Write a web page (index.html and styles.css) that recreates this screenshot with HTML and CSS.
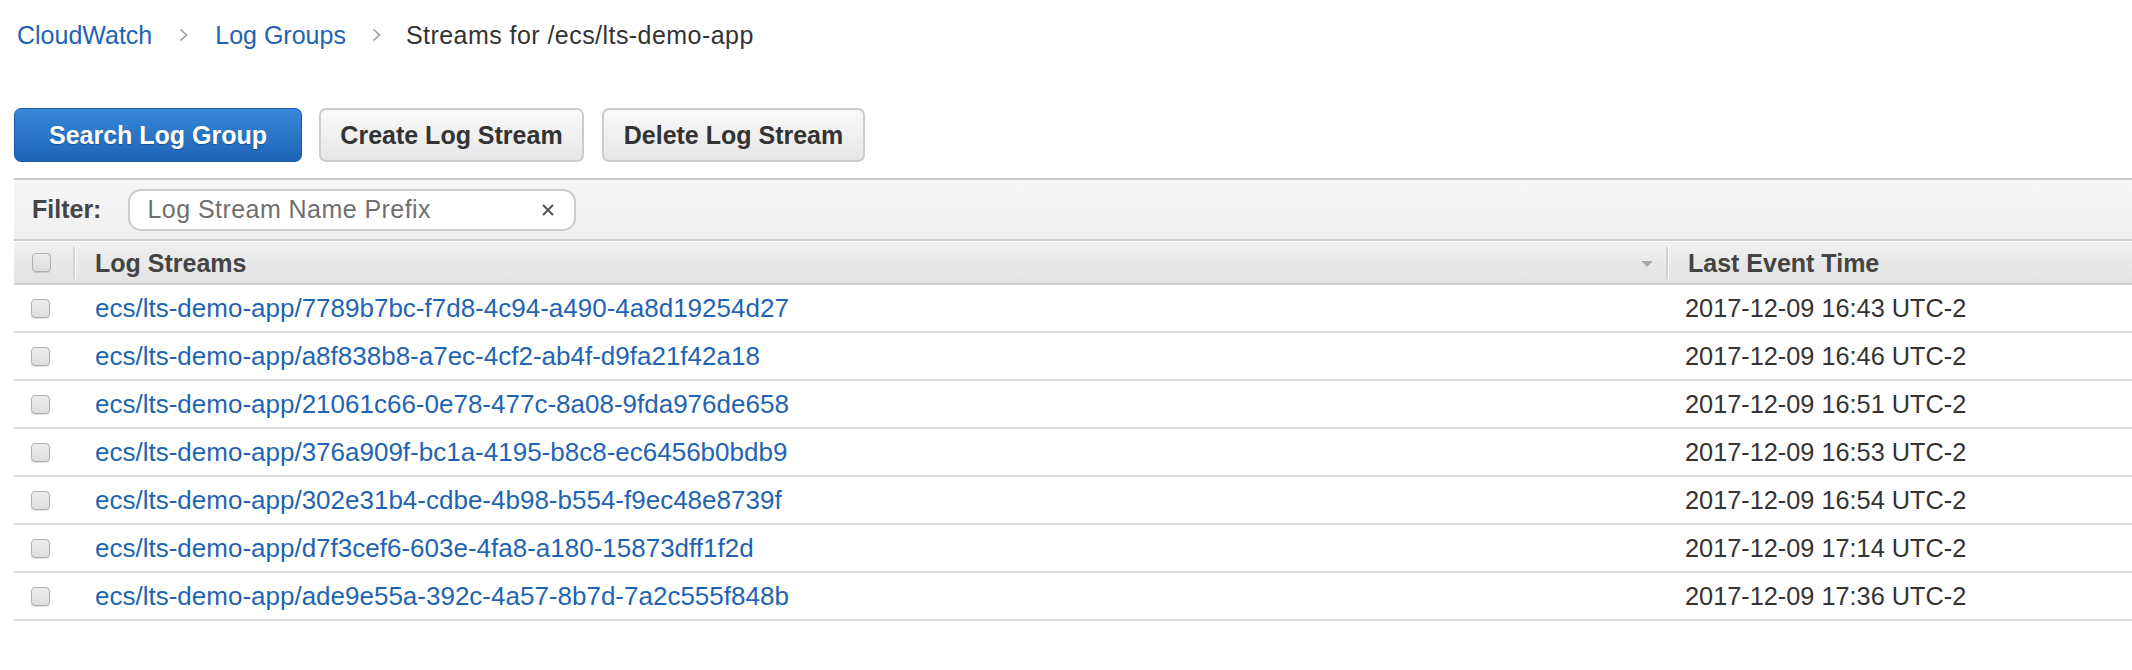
FILE: index.html
```html
<!DOCTYPE html>
<html lang="en">
<head>
<meta charset="utf-8">
<title>Streams for /ecs/lts-demo-app</title>
<link rel="stylesheet" href="styles.css">
</head>
<body>
<div class="page">
  <nav class="breadcrumb">
    <a class="crumb-link" href="#">CloudWatch</a>
    <svg class="chev" width="9" height="14" viewBox="0 0 9 14"><polyline points="1.5,1.5 7.5,7 1.5,12.5" fill="none" stroke="#9a9a9a" stroke-width="1.6"/></svg>
    <a class="crumb-link" href="#">Log Groups</a>
    <svg class="chev" width="9" height="14" viewBox="0 0 9 14"><polyline points="1.5,1.5 7.5,7 1.5,12.5" fill="none" stroke="#9a9a9a" stroke-width="1.6"/></svg>
    <span class="crumb-current">Streams for /ecs/lts-demo-app</span>
  </nav>

  <div class="toolbar">
    <button class="btn btn-primary">Search Log Group</button>
    <button class="btn btn-secondary btn-create">Create Log Stream</button>
    <button class="btn btn-secondary btn-delete">Delete Log Stream</button>
  </div>

  <div class="filter-bar">
    <span class="filter-label">Filter:</span>
    <div class="filter-input">
      <span class="placeholder">Log Stream Name Prefix</span>
      <svg class="clear" width="12" height="12" viewBox="0 0 12 12"><path d="M1 1 L11 11 M11 1 L1 11" stroke="#555" stroke-width="2" fill="none"/></svg>
    </div>
  </div>

  <div class="table">
    <div class="row head">
      <div class="cell cb-cell"><span class="cb"></span></div>
      <div class="cell hcell name-head"><span>Log Streams</span><span class="sort"></span></div>
      <div class="cell hcell">Last Event Time</div>
    </div>
    <div class="row">
      <div class="cell cb-cell"><span class="cb"></span></div>
      <div class="cell name"><a href="#">ecs/lts-demo-app/7789b7bc-f7d8-4c94-a490-4a8d19254d27</a></div>
      <div class="cell time">2017-12-09 16:43 UTC-2</div>
    </div>
    <div class="row">
      <div class="cell cb-cell"><span class="cb"></span></div>
      <div class="cell name"><a href="#">ecs/lts-demo-app/a8f838b8-a7ec-4cf2-ab4f-d9fa21f42a18</a></div>
      <div class="cell time">2017-12-09 16:46 UTC-2</div>
    </div>
    <div class="row">
      <div class="cell cb-cell"><span class="cb"></span></div>
      <div class="cell name"><a href="#">ecs/lts-demo-app/21061c66-0e78-477c-8a08-9fda976de658</a></div>
      <div class="cell time">2017-12-09 16:51 UTC-2</div>
    </div>
    <div class="row">
      <div class="cell cb-cell"><span class="cb"></span></div>
      <div class="cell name"><a href="#">ecs/lts-demo-app/376a909f-bc1a-4195-b8c8-ec6456b0bdb9</a></div>
      <div class="cell time">2017-12-09 16:53 UTC-2</div>
    </div>
    <div class="row">
      <div class="cell cb-cell"><span class="cb"></span></div>
      <div class="cell name"><a href="#">ecs/lts-demo-app/302e31b4-cdbe-4b98-b554-f9ec48e8739f</a></div>
      <div class="cell time">2017-12-09 16:54 UTC-2</div>
    </div>
    <div class="row">
      <div class="cell cb-cell"><span class="cb"></span></div>
      <div class="cell name"><a href="#">ecs/lts-demo-app/d7f3cef6-603e-4fa8-a180-15873dff1f2d</a></div>
      <div class="cell time">2017-12-09 17:14 UTC-2</div>
    </div>
    <div class="row">
      <div class="cell cb-cell"><span class="cb"></span></div>
      <div class="cell name"><a href="#">ecs/lts-demo-app/ade9e55a-392c-4a57-8b7d-7a2c555f848b</a></div>
      <div class="cell time">2017-12-09 17:36 UTC-2</div>
    </div>
  </div>
</div>
</body>
</html>
```
FILE: styles.css
```css
html, body {
  margin: 0;
  padding: 0;
  background: #ffffff;
}
body {
  font-family: "Liberation Sans", Arial, Helvetica, sans-serif;
  color: #333333;
}
.page {
  padding-left: 14px;
}
.breadcrumb {
  display: flex;
  align-items: center;
  padding: 21px 0 0 3px;
  height: 28px;
  font-size: 25px;
  line-height: 28px;
}
.crumb-link {
  color: #1f64b3;
  text-decoration: none;
}
.chev {
  margin: 0 27px;
  flex: none;
}
.breadcrumb .chev + .crumb-link + .chev {
  margin: 0 25px 0 26px;
}
.crumb-current {
  color: #333333;
  letter-spacing: 0.45px;
}
.toolbar {
  display: flex;
  gap: 17px;
  margin-top: 59px;
}
.btn {
  font-family: "Liberation Sans", Arial, Helvetica, sans-serif;
  font-size: 25px;
  font-weight: bold;
  height: 54px;
  line-height: 50px;
  border-radius: 7px;
  cursor: pointer;
  margin: 0;
  padding: 0;
  text-align: center;
}
.btn-primary {
  width: 288px;
  color: #ffffff;
  border: 1px solid #1a5aa6;
  background: linear-gradient(#3788d9, #1d63b5);
  text-shadow: 0 1px 1px rgba(0,0,0,0.25);
}
.btn-secondary {
  color: #333333;
  border: 2px solid #cccccc;
  background: linear-gradient(#fafafa, #e6e6e6);
}
.btn-create {
  width: 265px;
}
.btn-delete {
  width: 263px;
  margin-left: 1px;
}
.filter-bar {
  margin-top: 16px;
  display: flex;
  align-items: center;
  height: 59px;
  border-top: 2px solid #cbcbcb;
  border-bottom: 2px solid #cbcbcb;
  background: linear-gradient(#f6f6f6, #f0f0f0);
  padding-left: 18px;
}
.filter-label {
  font-size: 25px;
  font-weight: bold;
  color: #444444;
  margin-right: 27px;
}
.filter-input {
  box-sizing: border-box;
  width: 448px;
  height: 42px;
  border: 2px solid #cccccc;
  border-radius: 13px;
  background: #ffffff;
  display: flex;
  align-items: center;
  justify-content: space-between;
  padding: 0 20px 0 17px;
}
.placeholder {
  font-size: 25px;
  letter-spacing: 0.45px;
  color: #6f6f6f;
}
.clear {
  flex: none;
}
.table {
  display: flex;
  flex-direction: column;
}
.row {
  display: grid;
  grid-template-columns: 59px 1593px 1fr;
  height: 46px;
  border-bottom: 2px solid #dddddd;
  align-items: center;
}
.row.head {
  height: 41px;
  border-top: 1px solid #ffffff;
  border-bottom: 2px solid #cfcfcf;
  background: linear-gradient(#f0f0f0, #e2e2e2);
  align-items: stretch;
}
.cell {
  display: flex;
  align-items: center;
  min-width: 0;
  white-space: nowrap;
}
.cb-cell {
  padding-left: 17px;
}
.head .cb-cell {
  padding-left: 18px;
}
.cb {
  box-sizing: border-box;
  width: 19px;
  height: 19px;
  border: 1px solid #aeaeae;
  border-radius: 4px;
  background: linear-gradient(#ececec, #dedede);
  box-shadow: 0 1px 1px rgba(0,0,0,0.12);
}
.hcell {
  margin: 6px 0 3px 0;
  border-left: 2px solid #d2d2d2;
  box-shadow: inset 1px 0 0 #ffffff;
  font-size: 25px;
  font-weight: bold;
  color: #444444;
  padding-left: 20px;
  position: relative;
  top: -1px;
}
.name-head {
  justify-content: space-between;
  padding-right: 13px;
}
.sort {
  width: 0;
  height: 0;
  border-left: 6px solid transparent;
  border-right: 6px solid transparent;
  border-top: 6px solid #a8a8a8;
  margin-top: 2px;
}
.name {
  padding-left: 22px;
  font-size: 26px;
}
.name a {
  color: #1f64b3;
  text-decoration: none;
}
.time {
  padding-left: 19px;
  font-size: 25.3px;
  color: #333333;
}
```
